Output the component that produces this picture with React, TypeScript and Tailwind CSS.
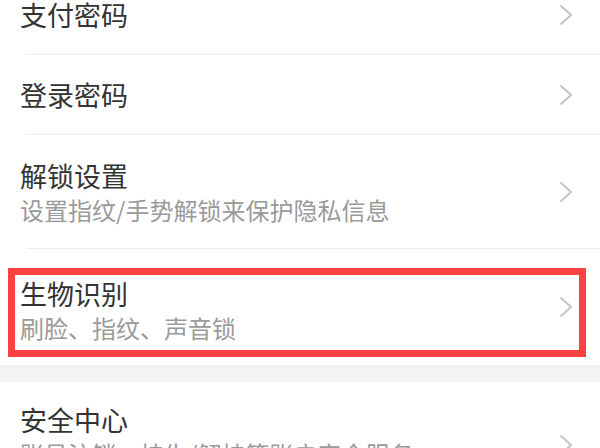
import React from 'react'

type Item = {
  title: string
  desc?: string
  h: string
  pad?: string
  line?: boolean
}

function Chevron() {
  return (
    <svg width="14" height="22" viewBox="0 0 14 22" className="shrink-0">
      <path d="M1.5 1.5 L12 11 L1.5 20.5" fill="none" stroke="#c4c4c4" strokeWidth="2" />
    </svg>
  )
}

function Row({ item }: { item: Item }) {
  return (
    <div className={`relative flex items-center bg-white pl-5 pr-[27px] ${item.h}`}>
      <div className={`flex flex-1 flex-col ${item.pad ?? ''}`}>
        <span className="text-[27px] leading-[34px] text-[#333333]">{item.title}</span>
        {item.desc && (
          <span className="mt-[2px] text-[24px] leading-[30px] text-[#9a9a9a]">{item.desc}</span>
        )}
      </div>
      <Chevron />
      {item.line && <div className="absolute bottom-0 left-[26px] right-0 h-px bg-[#ededed]" />}
    </div>
  )
}

export default function App() {
  const group1: Item[] = [
    { title: '支付密码', h: 'h-[80px] -mt-[25px]', line: true },
    { title: '登录密码', h: 'h-[80px]', line: true },
    { title: '解锁设置', desc: '设置指纹/手势解锁来保护隐私信息', h: 'h-[114px]', line: true },
    { title: '生物识别', desc: '刷脸、指纹、声音锁', h: 'h-[116px]', pad: 'pt-[6px]' },
  ]

  return (
    <div
      className="relative h-[448px] w-[600px] overflow-hidden bg-white"
      style={{ fontFamily: '"Noto Sans CJK SC", "Noto Sans", sans-serif' }}
    >
      {group1.map((it) => (
        <Row key={it.title} item={it} />
      ))}
      <div className="h-[17px] bg-[#f3f3f5]" />
      <div className="relative flex h-[126px] bg-white pl-5 pr-[27px]">
        <div className="flex flex-1 flex-col pt-[21px]">
          <span className="text-[27px] leading-[34px] text-[#333333]">安全中心</span>
          <span className="mt-[2px] text-[24px] leading-[30px] text-[#9a9a9a]">
            账号注销、挂失/解挂等账户安全服务
          </span>
        </div>
        <div className="flex items-center">
          <Chevron />
        </div>
      </div>

      {/* annotation box */}
      <div className="absolute left-[8px] top-[268px] h-[89px] w-[578px] border-[7px] border-[#fb4141]" />
    </div>
  )
}
